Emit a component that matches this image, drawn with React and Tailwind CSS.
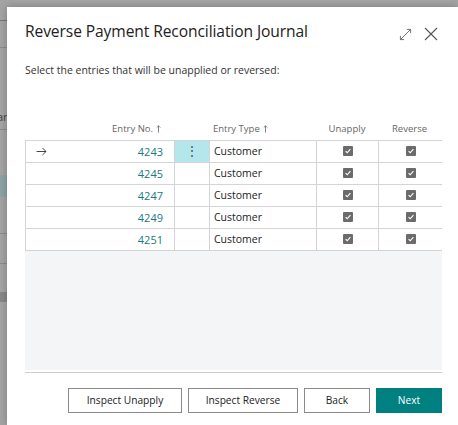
import React from "react";

const rows = ["4243", "4245", "4247", "4249", "4251"];

function Check() {
  return (
    <span className="inline-flex items-center justify-center size-[10px] rounded-[1px] bg-[#6b6b6b]">
      <svg viewBox="0 0 10 10" className="size-[8px]">
        <path d="M2 5.2 L4 7.2 L8 2.8" fill="none" stroke="#fff" strokeWidth="1.4" />
      </svg>
    </span>
  );
}

function SortUp() {
  return (
    <svg viewBox="0 0 6 10" className="inline-block w-[5px] h-[8px] ml-[3px] -mt-[2px]">
      <path d="M3 9.5 V1 M0.8 3.2 L3 1 L5.2 3.2" fill="none" stroke="#666" strokeWidth="1" />
    </svg>
  );
}

function BackPage() {
  return (
    <div className="w-[7px] shrink-0 flex flex-col overflow-hidden">
      <div className="h-[20px]" />
      <div className="h-px bg-[#6f7680]" />
      <div className="h-[26px]" />
      <div className="h-px bg-[#8c8c8c]" />
      <div className="h-[81px] flex items-end">
        <span className="text-[11px] leading-none text-[#444] -ml-[3px] mb-[7px]">ar</span>
      </div>
      <div className="h-px bg-[#8c8c8c]" />
      <div className="h-[45px]" />
      <div className="h-[22px] bg-[#8fa3a6]" />
      <div className="h-[36px]" />
      <div className="h-px bg-[#8c8c8c]" />
      <div className="h-[29px]" />
      <div className="h-px bg-[#8c8c8c]" />
      <div className="h-[28px]" />
      <div className="h-[10px] bg-[#888]" />
    </div>
  );
}

export default function App() {
  return (
    <div
      className="w-[458px] h-[425px] bg-[#a4a4a4] flex overflow-hidden"
      style={{ fontFamily: '"Open Sans", "Noto Sans", sans-serif' }}
    >
      <BackPage />
      <div className="mt-[7px] flex-1 bg-white shadow-[0_0_8px_rgba(0,0,0,0.25)] pl-[18px] pr-[16px] flex flex-col">
        <div className="h-[35px] flex items-end justify-between">
          <h1 className="text-[15.6px] leading-none text-[#212121] tracking-[-0.1px] mb-[2px]">
            Reverse Payment Reconciliation Journal
          </h1>
          <div className="flex items-center gap-[12px] mr-[4px] mb-[1px]">
            <svg viewBox="0 0 14 14" className="size-[13px]">
              <path d="M1.5 12.5 L12.5 1.5 M1.5 12.5 V8.5 M1.5 12.5 H5.5 M12.5 1.5 V5.5 M12.5 1.5 H8.5" fill="none" stroke="#666" strokeWidth="1" />
            </svg>
            <svg viewBox="0 0 14 14" className="size-[14px]">
              <path d="M1 1 L13 13 M13 1 L1 13" fill="none" stroke="#555" strokeWidth="1.1" />
            </svg>
          </div>
        </div>
        <p className="mt-[23px] text-[10.5px] leading-none text-[#333]">
          Select the entries that will be unapplied or reversed:
        </p>
        <div className="mt-[46px] flex h-[15px] items-center text-[9.5px] text-[#666] leading-none">
          <div className="w-[149px] text-right pr-[13px]">
            Entry No.<SortUp />
          </div>
          <div className="w-[35px]" />
          <div className="w-[107px] pl-[4px]">
            Entry Type<SortUp />
          </div>
          <div className="w-[62px] text-center">Unapply</div>
          <div className="w-[63px] text-center">Reverse</div>
        </div>
        <div className="mt-[3px] w-[417px] border-t border-[#d4d4d8]">
          {rows.map((n, i) => (
            <div key={n} className="flex h-[22px] border-b border-[#d4d4d8] text-[10.5px] leading-none">
              <div className="w-[149px] border-l border-[#d4d4d8] flex items-center pr-[11px]">
                {i === 0 && (
                  <svg viewBox="0 0 12 10" className="w-[11px] h-[9px] ml-[10px]">
                    <path d="M0.5 5 H11 M7 1 L11 5 L7 9" fill="none" stroke="#333" strokeWidth="1" />
                  </svg>
                )}
                <span className="ml-auto text-[11px] text-[#1a7a80]">{n}</span>
              </div>
              <div
                className={
                  "w-[35px] border-l border-[#d4d4d8] flex items-center justify-center " +
                  (i === 0 ? "bg-[#b3e7ec]" : "")
                }
              >
                {i === 0 && <span className="text-[#444] text-[12px]">⋮</span>}
              </div>
              <div className="w-[107px] border-l border-[#d4d4d8] flex items-center pl-[4px] text-[#222]">
                Customer
              </div>
              <div className="w-[62px] border-l border-[#d4d4d8] flex items-center justify-center">
                <Check />
              </div>
              <div className="w-[64px] border-l border-[#d4d4d8] flex items-center justify-center">
                <Check />
              </div>
            </div>
          ))}
          <div className="h-[119px] bg-[#f4f5f7]" />
        </div>
        <div className="mt-[2px] w-[417px] h-[1px] bg-[#cccccc]" />
        <div className="mt-[15px] w-[417px] flex justify-end gap-[6px] text-[10.2px] leading-none">
          <button className="w-[114px] h-[25px] border border-[#8a8a8a] text-[#222]">Inspect Unapply</button>
          <button className="w-[110px] h-[25px] border border-[#8a8a8a] text-[#222]">Inspect Reverse</button>
          <button className="w-[66px] h-[25px] border border-[#8a8a8a] text-[#222]">Back</button>
          <button className="w-[66px] h-[25px] bg-[#008080] text-white">Next</button>
        </div>
      </div>
    </div>
  );
}
